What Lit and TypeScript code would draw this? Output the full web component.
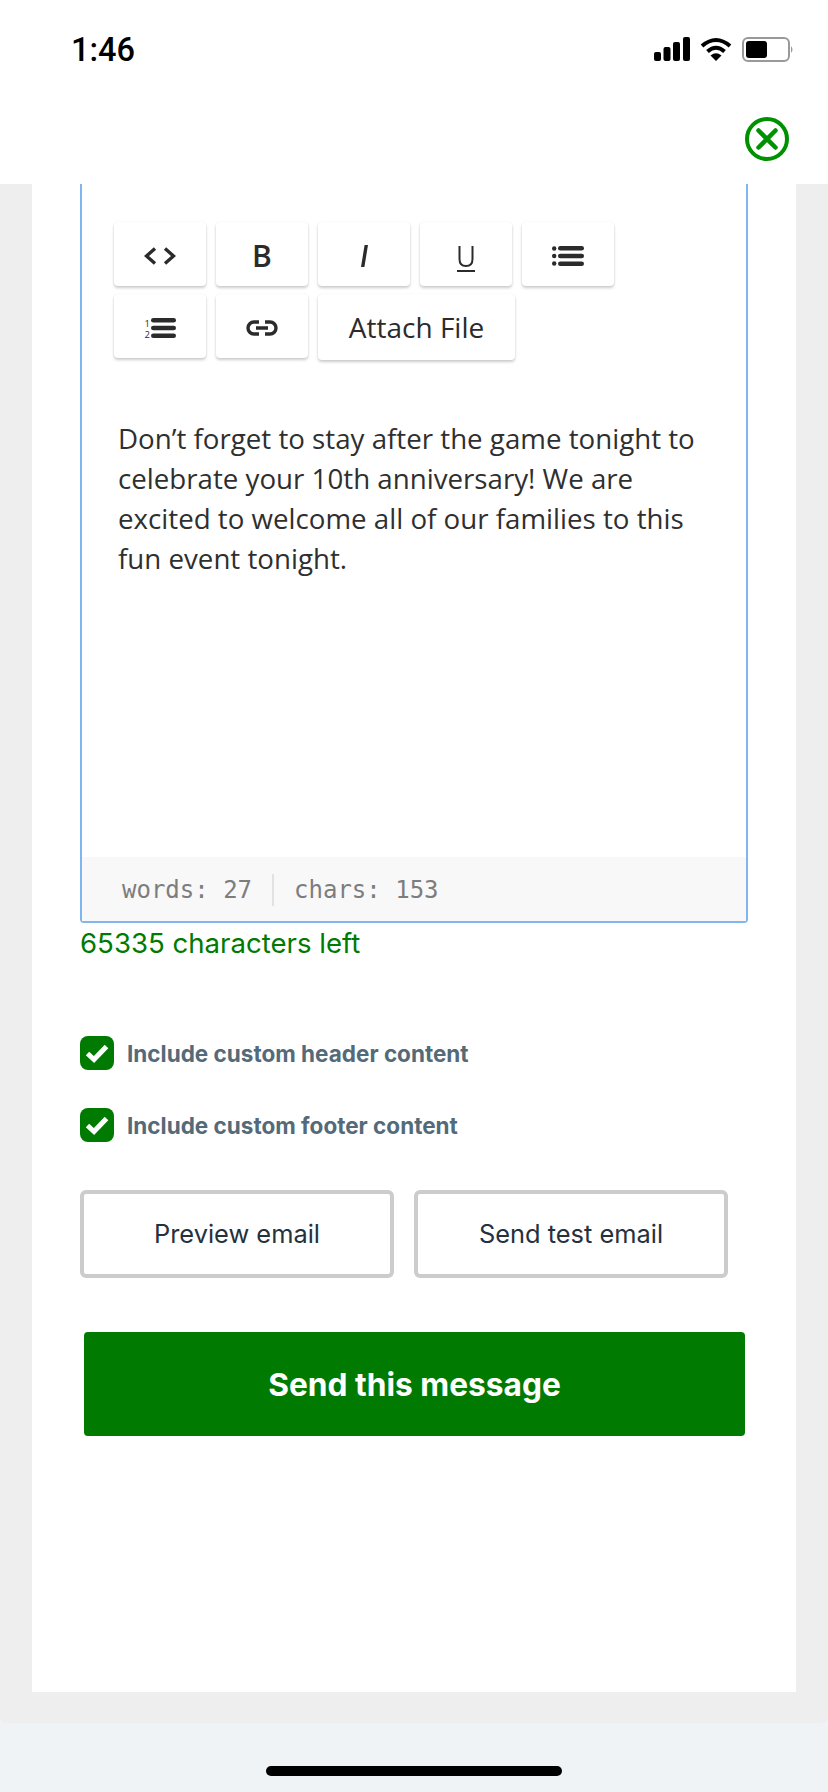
import { LitElement, html, css } from "lit";
import { customElement } from "lit/decorators.js";

@customElement("app-root")
export class AppRoot extends LitElement {
  static styles = css`
    :host { display: flex; flex-direction: column; width: 828px; height: 1792px; overflow: hidden; background: #eff3f6; font-family: "Inter", sans-serif; }
    .top { height: 184px; background: #fff; box-sizing: border-box; flex: none; display: flex; flex-direction: column; }
    .status { height: 99px; padding: 33px 34px 0 71px; box-sizing: border-box; display: flex; justify-content: space-between; align-items: flex-start; }
    .time { font: 500 32.5px/34px "Roboto", sans-serif; color: #000; }
    .sys { display: flex; gap: 10px; align-items: flex-start; margin-top: 4px; }
    .closebar { display: flex; justify-content: flex-end; padding: 18px 39px 0 0; }
    .page { height: 1539px; flex: none; background: #eee; border-radius: 0 0 6px 6px; padding: 0 32px; box-sizing: border-box; }
    .card { height: 1508px; background: #fff; padding: 0 48px; box-sizing: border-box; }
    .editor { height: 739px; width: 668px; box-sizing: border-box; border: 2px solid #80b5ef; border-top: 0; border-radius: 0 0 4px 4px; display: flex; flex-direction: column; }
    .toolbar { display: flex; flex-wrap: wrap; gap: 8px 10px; padding: 38px 32px 0; align-items: flex-start; }
    .tool { width: 92px; height: 64px; box-sizing: border-box; padding-top: 4px; background: #fff; border-radius: 4px; box-shadow: 0 2px 3px rgba(0,0,0,.2), 0 0 2px rgba(0,0,0,.06); display: flex; align-items: center; justify-content: center; color: #2b2b2b; font: 400 28px/1 "Open Sans", sans-serif; }
    .tool.b { font-weight: 600; font-size: 30px; }
    .tool.u { padding-top: 10px; }
    .tool.attach { width: 197px; height: 66px; padding-top: 0; }
    .body { flex: 1; padding: 58px 36px 0; font: 400 27.7px/40px "Open Sans", sans-serif; color: #2f2f2f; }
    .foot { height: 64px; flex: none; box-sizing: border-box; padding-top: 1px; background: #f8f8f8; display: flex; align-items: center; padding-left: 40px; font: 400 24px/1 "DejaVu Sans Mono", monospace; color: #7d7d7d; }
    .div { width: 2px; height: 32px; background: #e2e2e2; margin: 0 20px; }
    .left { color: #007a00; font-size: 27.6px; line-height: 36px; margin-top: 2px; }
    .check { display: flex; align-items: center; gap: 13px; font-weight: 700; font-size: 22.5px; color: #546a79; height: 34px; }
    .check.first { margin-top: 75px; }
    .check.second { margin-top: 38px; }
    .label { padding-top: 1px; }
    .box { width: 34px; height: 34px; border-radius: 8px; background: #007a00; display: flex; align-items: center; justify-content: center; }
    .btns { display: flex; gap: 20px; margin-top: 48px; }
    .ghost { width: 314px; height: 88px; box-sizing: border-box; padding-bottom: 2px; border: 4px solid #ccc; border-radius: 6px; display: flex; align-items: center; justify-content: center; font-size: 25.4px; color: #25313d; }
    .send { margin: 54px 0 0 4px; width: 661px; height: 104px; background: #007a00; border-radius: 4px; color: #fff; display: flex; align-items: center; justify-content: center; font-size: 31.7px; font-weight: 700; }
    .home { align-self: center; width: 296px; height: 10px; border-radius: 5px; background: #000; margin-top: 43px; }
    svg { display: block; }
    .num { font: 400 9.5px "Open Sans", sans-serif; fill: #2b2b2b; }
  `;

  render() {
    return html`
      <div class="top">
        <div class="status">
          <div class="time">1:46</div>
          <div class="sys">
            <svg width="36" height="24" viewBox="0 0 36 24" fill="#000">
              <rect x="0" y="15" width="7" height="9" rx="2"/><rect x="9.5" y="10" width="7" height="14" rx="2"/><rect x="19" y="5" width="7" height="19" rx="2"/><rect x="29" y="0" width="7" height="24" rx="2"/>
            </svg>
            <svg width="32" height="24" viewBox="0 0 32 24" fill="none" stroke="#000" stroke-width="4">
              <path d="M2 9 Q16 -3 30 9"/><path d="M7.5 14.5 Q16 7 24.5 14.5"/><path d="M16 24 L10.5 18.5 Q16 14 21.5 18.5 Z" fill="#000" stroke="none"/>
            </svg>
            <svg width="52" height="25" viewBox="0 0 52 25">
              <rect x="1" y="1" width="46" height="23" rx="5" fill="none" stroke="#999" stroke-width="2"/>
              <rect x="4" y="4" width="21" height="17" rx="3" fill="#000"/>
              <path d="M49 9 Q52 12.5 49 16 Z" fill="#999"/>
            </svg>
          </div>
        </div>
        <div class="closebar">
          <svg width="44" height="44" viewBox="0 0 44 44" fill="none" stroke="#009100">
            <circle cx="22" cy="22" r="20" stroke-width="4"/>
            <path d="M13.5 13.5 L30.5 30.5 M30.5 13.5 L13.5 30.5" stroke-width="4.5" stroke-linecap="round"/>
          </svg>
        </div>
      </div>
      <div class="page">
        <div class="card">
          <div class="editor">
            <div class="toolbar">
              <div class="tool">
                <svg width="32" height="18" viewBox="0 0 32 18" fill="none" stroke="#2b2b2b" stroke-width="3.4"><path d="M11 1.5 L2.5 9 L11 16.5 M21 1.5 L29.5 9 L21 16.5"/></svg>
              </div>
              <div class="tool b">B</div>
              <div class="tool">
                <svg width="7" height="22" viewBox="0 0 7 22"><path d="M3.6 0 H7 L3.4 22 H0 Z" fill="#2b2b2b"/></svg>
              </div>
              <div class="tool u">
                <svg width="18" height="26" viewBox="0 0 18 26" fill="none" stroke="#2b2b2b" stroke-width="2"><path d="M2.5 0 V13 Q2.5 20 9 20 Q15.5 20 15.5 13 V0 M0 25 H18"/></svg>
              </div>
              <div class="tool">
                <svg width="32" height="20" viewBox="0 0 32 20" fill="#2b2b2b"><circle cx="2.2" cy="2.5" r="2.2"/><circle cx="2.2" cy="10" r="2.2"/><circle cx="2.2" cy="17.5" r="2.2"/><rect x="6" y="0" width="26" height="4.6" rx="2.3"/><rect x="6" y="7.7" width="26" height="4.6" rx="2.3"/><rect x="6" y="15.4" width="26" height="4.6" rx="2.3"/></svg>
              </div>
              <div class="tool">
                <svg width="32" height="25" viewBox="0 -2 32 25" fill="#2b2b2b"><text class="num" x="0.5" y="9">1</text><text class="num" x="0.5" y="20">2</text><rect x="7" y="0" width="25" height="4.6" rx="2.3"/><rect x="7" y="7.7" width="25" height="4.6" rx="2.3"/><rect x="7" y="15.4" width="25" height="4.6" rx="2.3"/></svg>
              </div>
              <div class="tool">
                <svg width="32" height="16" viewBox="0 0 32 16" fill="none" stroke="#2b2b2b" stroke-width="3.4"><path d="M13 2 H8 A6 6 0 0 0 8 14 H13 M19 2 H24 A6 6 0 0 1 24 14 H19 M10 8 H22"/></svg>
              </div>
              <div class="tool attach">Attach File</div>
            </div>
            <div class="body">Don’t forget to stay after the game tonight to celebrate your 10th anniversary! We are excited to welcome all of our families to this fun event tonight.</div>
            <div class="foot"><span>words: 27</span><span class="div"></span><span>chars: 153</span></div>
          </div>
          <div class="left">65335 characters left</div>
          <div class="check first"><span class="box">${this.tick()}</span><span class="label">Include custom header content</span></div>
          <div class="check second"><span class="box">${this.tick()}</span><span class="label">Include custom footer content</span></div>
          <div class="btns"><div class="ghost">Preview email</div><div class="ghost">Send test email</div></div>
          <div class="send">Send this message</div>
        </div>
      </div>
      <div class="home"></div>
    `;
  }

  tick() {
    return html`<svg width="24" height="20" viewBox="0 0 24 20" fill="none" stroke="#fff" stroke-width="5"><path d="M2.5 10.5 L9 16.5 L21.5 3.5"/></svg>`;
  }
}
